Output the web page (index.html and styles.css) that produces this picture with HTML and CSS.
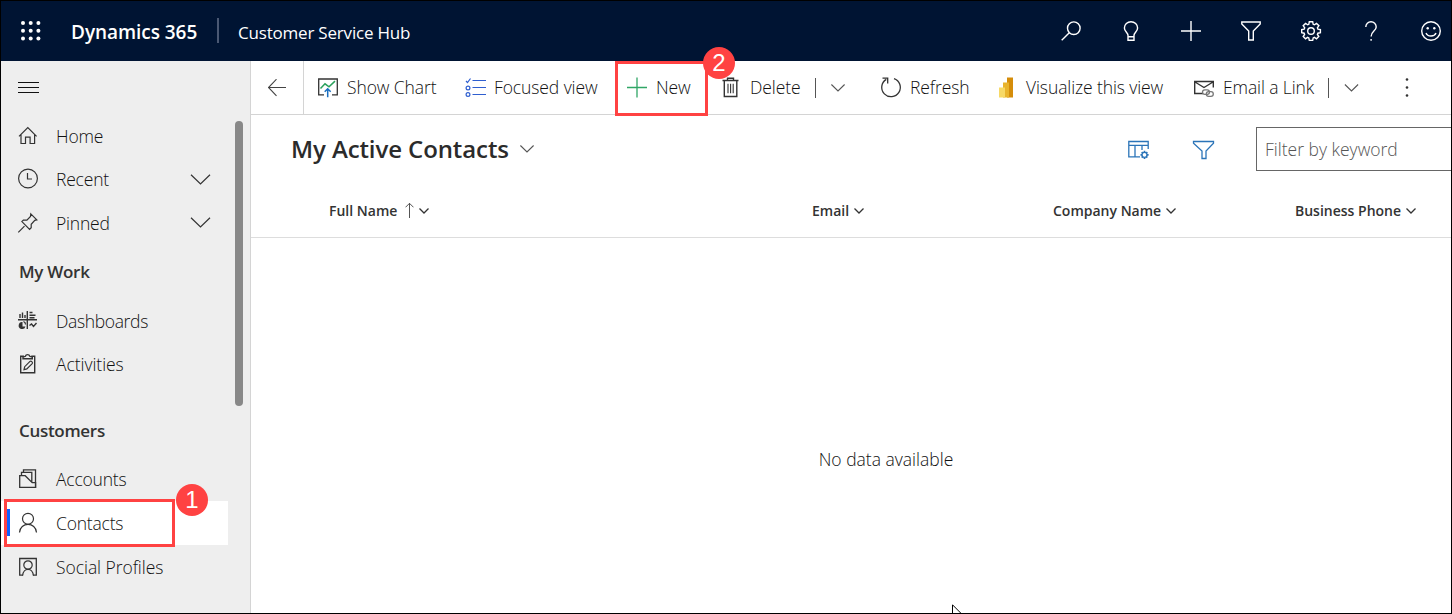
FILE: index.html
```html
<!DOCTYPE html>
<html lang="en">
<head>
<meta charset="utf-8">
<title>Customer Service Hub</title>
<link rel="stylesheet" href="styles.css">
</head>
<body>
<div class="app">
  <header class="topbar">
    <svg class="waffle" width="20" height="20" viewBox="0 0 20 20"><g fill="#fff"><circle cx="2" cy="2" r="2"/><circle cx="9.700" cy="2" r="2"/><circle cx="17.400" cy="2" r="2"/><circle cx="2" cy="9.700" r="2"/><circle cx="9.700" cy="9.700" r="2"/><circle cx="17.400" cy="9.700" r="2"/><circle cx="2" cy="17.400" r="2"/><circle cx="9.700" cy="17.400" r="2"/><circle cx="17.400" cy="17.400" r="2"/></g></svg>
    <span class="brand">Dynamics 365</span>
    <span class="brand-rule"></span>
    <span class="hub">Customer Service Hub</span>
    <nav class="top-icons">
      <svg class="ic" viewBox="0 0 20 20"><circle cx="12.800" cy="7.200" r="6.300"/><path d="M8.300 11.700L.7 19.300"/></svg>
      <svg class="ic" viewBox="0 0 20 20"><path d="M7 14.500c0-3.200-3.600-4-3.600-7.500a6.600 6.300 0 0 1 13.200 0c0 3.500-3.600 4.300-3.600 7.500M7 14v5.300h6V14M7 15.800h6"/></svg>
      <svg class="ic" viewBox="0 0 20 20"><path d="M10 0v20M0 10h20"/></svg>
      <svg class="ic" viewBox="0 0 20 20"><path d="M.8 1h18.400v2L12.300 10v9H7.700v-9L.8 3z"/></svg>
      <svg class="ic" viewBox="0 0 20 20"><circle cx="10" cy="10" r="3.300"/><path d="M8.300.8h3.400l.5 2.500 1.200.5 2.100-1.400 2.400 2.300-1.500 2.200.5 1.200 2.500.4v3.200l-2.500.5-.5 1.200 1.400 2.100-2.300 2.300-2.100-1.400-1.200.5-.5 2.500H8.300l-.5-2.500-1.200-.5-2.100 1.400-2.300-2.300 1.400-2.100-.5-1.200-2.400-.5V8.500l2.500-.4.500-1.200-1.500-2.200 2.400-2.300 2.100 1.400 1.100-.5z"/></svg>
      <svg class="ic" viewBox="0 0 20 20"><path d="M4.800 6a5.200 5.200 0 0 1 10.400 0c0 4-5.100 4.400-5.100 9.500M10.100 18v1.700"/></svg>
      <svg class="ic" viewBox="0 0 20 20"><circle cx="10" cy="10" r="9.300"/><path d="M5 12c1.500 4 8.500 4 10 0"/><g fill="#fff" stroke="none"><circle cx="6.700" cy="7.300" r="1.200"/><circle cx="13.300" cy="7.300" r="1.200"/></g></svg>
    </nav>
  </header>
  <div class="body">
    <aside class="sidebar">
      <svg class="burger" width="21" height="12" viewBox="0 0 21 12"><path d="M0 .5h21M0 5.500h21M0 10.500h21" stroke="#111"/></svg>
      <ul class="nav">
        <li class="row"><svg class="ic" viewBox="0 0 20 20"><path d="M1 10.300L9.800 1.500l8.800 8.800M3 8.500V17.500h4.500v-6.300h4.600v6.300h4.500V8.500"/></svg><span class="t">Home</span></li>
        <li class="row"><svg class="ic" viewBox="0 0 20 20"><circle cx="10" cy="9.500" r="9.400"/><path d="M9.500 4v6h4.500"/></svg><span class="t">Recent</span><svg class="chev" viewBox="0 0 20 11"><path d="M0 .7L9.500 10 19 .7"/></svg></li>
        <li class="row"><svg class="ic" viewBox="0 0 20 20"><path d="M.3 19.300l6.200-6.200M12.800.8l6 6-2 .5-3.600 4v3.500l-1.600 1.500-7.700-7.700 1.500-1.500h3.500l3.600-3.700z"/></svg><span class="t">Pinned</span><svg class="chev" viewBox="0 0 20 11"><path d="M0 .7L9.500 10 19 .7"/></svg></li>
      </ul>
      <h2 class="group"><span class="t">My Work</span></h2>
      <ul class="nav">
        <li class="row"><svg class="ic" viewBox="0 0 20 20"><path stroke-width="1.400" d="M0 8.800h19M9.300 0v18M2 3v4M4.500 1.500V7M7 4v3M11.500 1.500h3M11.500 4.200h6M11.500 6.800h5M11.500 14.500l2-1.500 2 2.500 3-3.500"/><path fill="#333" stroke="none" d="M4.500 11a3.500 3.500 0 1 0 3 4.500H4.500z"/><path d="M5.500 10.500a3 3 0 0 1 2 3"/></svg><span class="t tight">Dashboards</span></li>
        <li class="row"><svg class="ic" viewBox="0 0 20 20"><path stroke-width="1.400" d="M6 2.200H2.700v16.600h14V2.200h-3.500M5 4.700h9.300V3l-2.500-.7a2.300 2.300 0 0 0-4.400 0L5 3z"/><path d="M6 15.700l.7-3 5.300-5.300c1-1 3.200 1 2.200 2.200l-5.400 5.300z"/></svg><span class="t loose">Activities</span></li>
      </ul>
      <h2 class="group tall"><span class="t">Customers</span></h2>
      <ul class="nav">
        <li class="row"><svg class="ic" viewBox="0 0 20 20"><path stroke-width="1.300" d="M1.700 18.300V6.700h5.500l7 7h3.500v4.600zM3.500 6.500V3.300h10.300v10M5.500 3V.8h12v17"/></svg><span class="t">Accounts</span></li>
        <li class="row selected"><svg class="ic" viewBox="0 0 20 20"><circle cx="10" cy="5.800" r="5.500"/><path d="M1.500 19.500c.5-10.800 16.500-10.800 17 0"/></svg><span class="t">Contacts</span></li>
        <li class="row"><svg class="ic" viewBox="0 0 20 20"><path stroke-width="1.300" d="M5 18.200H1.700V1.500h16.600v16.700H15"/><circle cx="10" cy="8" r="4.200"/><path d="M4.700 18.500c.3-8.300 10.300-8.300 10.600 0"/></svg><span class="t loose">Social Profiles</span></li>
      </ul>
      <div class="thumb"></div>
    </aside>
    <main class="main">
      <div class="commands">
        <div class="back"><svg width="18" height="18" viewBox="0 0 18 18"><path d="M0 8.500h18M8.500.2L.5 8.500l8 8.300" fill="none" stroke="#444" stroke-width="1.100"/></svg></div>
        <div class="cmd c1"><svg class="ic" viewBox="0 0 20 20"><path stroke-width="1.300" d="M6 16.800H.7V1h18.600v15.800H14"/><path stroke="#2aa15c" stroke-width="1.500" d="M2.500 10.500L7 5.800l4 3 6-5.700"/><path stroke="#1a6fc0" stroke-width="1.500" d="M9.700 19.300v-8.500M6.700 13.800l3-3 3 3"/></svg><span class="t">Show Chart</span></div>
        <div class="cmd c2"><svg class="ic blue" viewBox="0 0 20 20"><path d="M7.500 2.500H21M7.500 9.500H21M7.500 16.500H21M1 3l1.500 1.500L5.500.5"/><circle cx="3" cy="10" r="1.900"/><circle cx="3" cy="16.500" r="1.900"/></svg><span class="t">Focused view</span></div>
        <div class="cmd c3"><svg class="ic" viewBox="0 0 20 20"><path stroke="#30a666" stroke-width="1.300" d="M10-.5v20M0 9.500h20"/></svg><span class="t">New</span></div>
        <div class="cmd c4"><svg class="ic" viewBox="0 0 20 20"><path stroke-width="1.400" d="M1.500 2.500h16M6.500 2.200V.2h6v2M3.300 2.700v15.800h12.500V2.700"/><path stroke-width="1.100" d="M7 5.700v9.500M9.600 5.700v9.500M12.200 5.700v9.500"/></svg><span class="t">Delete</span></div>
        <div class="split"><svg class="chev sm" viewBox="0 0 14 8"><path d="M.4.500L7 7 13.600.5"/></svg></div>
        <div class="cmd c5"><svg class="ic" viewBox="0 0 20 20"><path stroke-width="1.300" d="M13 .6A9.300 9.300 0 1 1 5.300 1.400M1.500.2h5.200v5.200"/></svg><span class="t">Refresh</span></div>
        <div class="cmd c6"><svg class="ic" viewBox="0 0 20 20"><g stroke="none"><path fill="#d58d0a" d="M10-.5h6v20h-6z"/><path fill="#e9b42d" d="M6 4.500h6v15H6z"/><path fill="#f7d967" d="M2 9.500h6v10H2z"/></g></svg><span class="t">Visualize this view</span></div>
        <div class="cmd c7"><svg class="ic" viewBox="0 0 20 20"><path stroke-width="1.400" d="M9 15.500H.7v-12h18.600v6M1 4l9 5.500L19 4"/><g stroke="#777" stroke-width="1.300"><rect x="8.500" y="11.800" width="7" height="4.600" rx="2.300"/><rect x="12.300" y="13.700" width="7" height="4.600" rx="2.300"/></g></svg><span class="t">Email a Link</span></div>
        <div class="split last"><svg class="chev sm" viewBox="0 0 14 8"><path d="M.9.500L7.500 7 14.100.5"/></svg></div>
        <svg class="dots" width="4" height="20" viewBox="0 0 4 20"><g fill="#333"><circle cx="2" cy="1.500" r="1.300"/><circle cx="2" cy="9.500" r="1.300"/><circle cx="2" cy="17.500" r="1.300"/></g></svg>
      </div>
      <div class="viewbar">
        <h1 class="title">My Active Contacts</h1>
        <svg class="chev sm" viewBox="0 0 14 8"><path d="M.4.500L7 7 13.600.5"/></svg>
        <div class="view-tools">
          <svg class="ic azure" viewBox="0 0 22 20"><path d="M12 16.800H.8V1.500h19.400V9M.8 5.300h19.400M7 5.300v11.500M14 5.300V10"/><circle cx="16.500" cy="14.800" r="2.500"/><path stroke-width="1.700" d="M16.500 10.700v1.500M16.500 17.500V19M12.500 14.800H14M19 14.800h1.600M13.700 12l1 1M18.300 16.600l1 1M19.300 12l-1 1M14.700 16.600l-1 1"/></svg>
          <svg class="ic azure funnel" viewBox="0 0 22 20"><path d="M1.500 1.500h20v1.700L14 11v7.500h-4V11L1.500 3.200z"/></svg>
          <div class="filter"><span class="placeholder">Filter by keyword</span></div>
        </div>
      </div>
      <div class="columns">
        <div class="col k1"><span class="t">Full Name</span><svg class="sort" width="9" height="16" viewBox="0 0 9 16"><path d="M4.500 0v15M.5 4.300l4-4 4 4" fill="none" stroke="#555"/></svg><svg class="tiny" viewBox="0 0 10 6"><path d="M.5.500L5 5 9.500.5"/></svg></div>
        <div class="col k2"><span class="t">Email</span><svg class="tiny" viewBox="0 0 10 6"><path d="M.5.500L5 5 9.500.5"/></svg></div>
        <div class="col k3"><span class="t">Company Name</span><svg class="tiny" viewBox="0 0 10 6"><path d="M.5.500L5 5 9.500.5"/></svg></div>
        <div class="col k4"><span class="t">Business Phone</span><svg class="tiny" viewBox="0 0 10 6"><path d="M.5.500L5 5 9.500.5"/></svg></div>
      </div>
      <div class="empty"><span class="t">No data available</span></div>
    </main>
  </div>
  <div class="mark mark-contacts"></div><div class="badge badge-1">1</div>
  <div class="mark mark-new"></div><div class="badge badge-2">2</div>
  <svg class="cursor" width="12" height="10" viewBox="0 0 12 10"><path d="M.5 10V.8L9.700 10" fill="#fff" stroke="#000"/></svg>
</div>
</body>
</html>
```
FILE: styles.css
```css
* { box-sizing: border-box; }
body { margin: 0; font-family: "Open Sans", "Noto Sans", sans-serif; color: #111; background: #fff; }
.app { position: relative; width: 1452px; height: 614px; border: 1px solid #000; overflow: hidden; display: flex; flex-direction: column; background: #fff; }
svg { flex: none; display: block; }
.ic { width: 20px; height: 20px; fill: none; stroke: #333; stroke-width: 1.2; overflow: visible; }
.chev { width: 20px; height: 11px; fill: none; stroke: #333; stroke-width: 1.2; overflow: visible; }
.chev.sm { width: 14px; height: 8px; stroke-width: 1.1; stroke: #555; }
.t { display: block; white-space: nowrap; font-size: 17.5px; font-weight: 300; line-height: 24px; letter-spacing: -0.1px; }

.topbar { flex: none; height: 60px; background: #001433; color: #fff; display: flex; align-items: center; padding-left: 20px; white-space: nowrap; }
.brand { width: 146px; margin-left: 30px; font-size: 19px; font-weight: 600; letter-spacing: -0.05px; padding-top: 2px; }
.brand-rule { width: 2px; height: 25px; margin-right: 19px; margin-top: -2px; background: #4a5873; }
.hub { font-size: 17px; letter-spacing: -0.2px; padding-top: 2px; }
.top-icons { display: flex; gap: 40px; margin-left: auto; padding-right: 10px; }
.top-icons .ic { stroke: #fff; stroke-width: 1.4; }

.body { flex: 1; display: flex; min-height: 0; }
.sidebar { position: relative; flex: none; width: 250px; background: #eee; border-right: 1px solid #d4d4d4; padding-top: 21px; }
.burger { margin-left: 17px; margin-bottom: 20px; }
.nav { list-style: none; margin: 0; padding: 0; }
.row { display: flex; align-items: center; height: 43.6px; padding-left: 17px; }
.row .t { margin-left: 18px; letter-spacing: -0.2px; }
.row .t.tight { letter-spacing: -0.35px; }
.row .t.loose { letter-spacing: -0.05px; }
.row .chev { margin-left: auto; margin-right: 39px; }
.row.selected { background: #fff; width: 227px; }
.group { display: flex; align-items: center; height: 54px; margin: 0; padding-left: 18px; }
.group .t { font-size: 17px; font-weight: 600; letter-spacing: -0.3px; color: #333; }
.group.tall { height: 71.6px; padding-top: 18px; }
.thumb { position: absolute; left: 234px; top: 60px; width: 8px; height: 285px; border-radius: 4px; background: #888; }

.main { flex: 1; min-width: 0; display: flex; flex-direction: column; }
.commands { flex: none; height: 54px; display: flex; align-items: center; border-bottom: 1px solid #d4d4d4; }
.back { width: 53px; height: 53px; padding-left: 17px; display: flex; align-items: center; border-right: 1px solid #d4d4d4; margin-right: 14px; }
.cmd { flex: none; display: flex; align-items: center; gap: 9px; }
.cmd .t { margin-top: -2px; }
.c1 { width: 147px; } .c2 { width: 162px; } .c3 { width: 94px; } .c4 { width: 94px; }
.c5 { width: 116px; } .c6 { width: 197px; } .c7 { width: 134px; }
.split { flex: none; width: 66px; height: 20px; padding: 6px 0 0 15px; border-left: 1px solid #555; }
.split.last { width: 77px; }
.blue { stroke: #2f5fd0; }
.azure { width: 22px; stroke: #2b74b8; stroke-width: 1.3; }

.viewbar { flex: none; height: 68px; display: flex; align-items: center; padding-left: 40px; }
.title { margin: 0; width: 229px; font-size: 24px; font-weight: 600; line-height: 32px; letter-spacing: -0.1px; white-space: nowrap; color: #2b2b2b; }
.view-tools { display: flex; align-items: center; margin-left: auto; }
.view-tools .ic { margin-top: 2px; }
.view-tools .funnel { margin-left: 42px; margin-right: 42px; }
.filter { width: 195px; height: 44px; border: 1px solid #666; border-right: 0; display: flex; align-items: center; padding-left: 8px; }
.placeholder { font-size: 17.5px; font-weight: 300; color: #555; white-space: nowrap; }

.columns { flex: none; height: 55px; display: flex; align-items: center; border-bottom: 1px solid #ddd; padding: 2px 0 0 78px; }
.col { display: flex; align-items: center; }
.col .t { font-size: 14px; font-weight: 600; line-height: 20px; letter-spacing: 0; color: #333; }
.k1 { width: 483px; } .k2 { width: 241px; } .k3 { width: 242px; }
.tiny { width: 10px; height: 6px; margin-left: 5px; fill: none; stroke: #333; stroke-width: 1.3; }
.sort { margin-left: 8px; }
.empty { flex: 1; display: flex; align-items: center; justify-content: center; padding: 67px 0 0 70px; }
.empty .t { letter-spacing: 0; }

.mark { position: absolute; border: 3px solid #ff4242; }
.mark-contacts { left: 3px; top: 498px; width: 171px; height: 48px; }
.mark-contacts::before { content: ""; position: absolute; left: 0; top: 7px; width: 3px; height: 27px; background: #0f5fff; }
.mark-new { left: 614px; top: 60px; width: 93px; height: 55px; }
.badge { position: absolute; width: 32px; height: 32px; border-radius: 50%; background: #ff4242; color: #fff; font: 24px/32px "Liberation Sans", sans-serif; text-align: center; }
.badge-1 { left: 175px; top: 483px; }
.badge-2 { left: 702px; top: 46px; }
.cursor { position: absolute; left: 951px; top: 603px; }
```
